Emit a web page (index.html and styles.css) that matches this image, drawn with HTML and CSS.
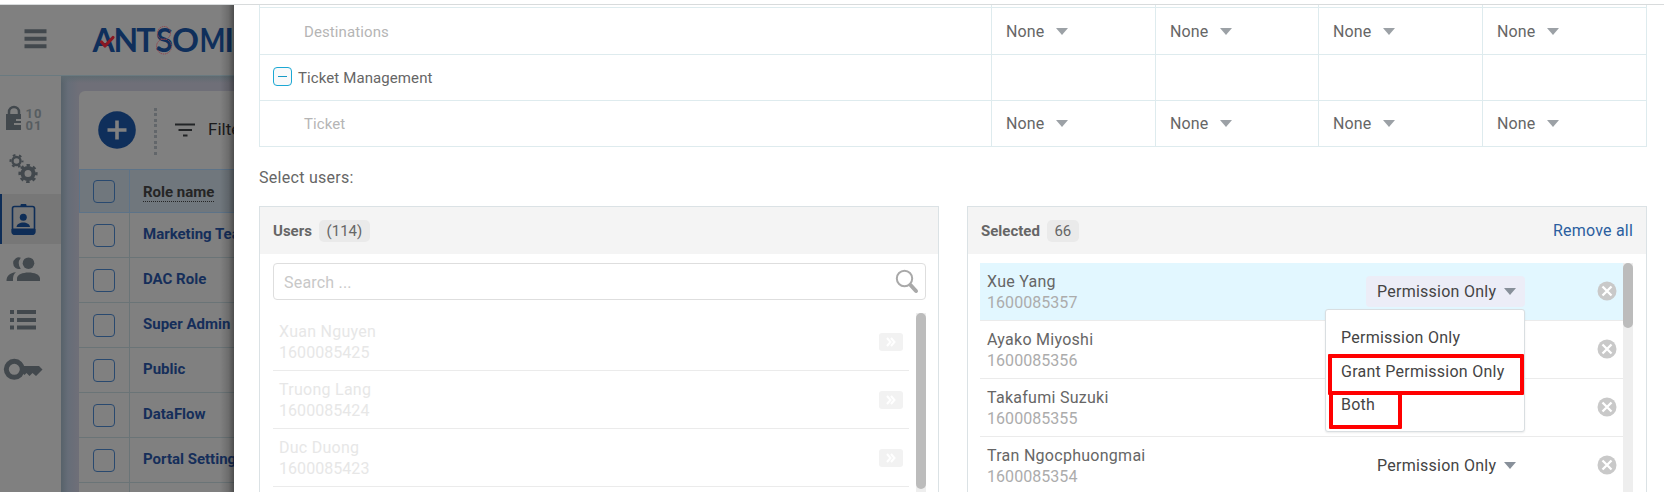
FILE: index.html
```html
<!DOCTYPE html>
<html lang="en">
<head>
<meta charset="utf-8">
<title>Roles</title>
<link rel="stylesheet" href="styles.css">
</head>
<body>
<div class="screen">
  <div class="app">
    <header class="topbar">
      <svg class="burger" width="23" height="20" viewBox="0 0 23 20"><path d="M.5 2.2h22M.5 9.700h22M.5 17.200h22" stroke="#42484d" stroke-width="4"/></svg>
      <svg class="logo" width="148" height="40" viewBox="90 20 148 40">
        <text class="logo-text" y="52" x="92.5 113.400 136.200 155.500">ANTS</text><text class="logo-text" y="52" x="172" textLength="27" lengthAdjust="spacingAndGlyphs">O</text><text class="logo-text" y="52" x="199.500" textLength="26" lengthAdjust="spacingAndGlyphs">M</text><text class="logo-text" y="52" x="224.500">I</text>
        <g fill="none" stroke="#91454e" stroke-width="1" stroke-dasharray="1.5 .8"><circle cx="164" cy="33" r="6.5"/><circle cx="164" cy="46.500" r="7.500"/></g>
        <path d="M101.500 42l3.500 4 8-8.500" fill="none" stroke="#8b1722" stroke-width="3.200" stroke-linecap="round" stroke-linejoin="round"/>
      </svg>
    </header>
    <div class="body">
      <nav class="side">
        <a class="nav"><svg width="62" height="50" viewBox="0 95 62 50"><path d="M9 115v-2a5 5 0 0 1 10 0v2" fill="none" stroke="#42484d" stroke-width="2.500"/><path d="M6 115h15v5h-5v2h5v2h-7v2h7v5H6z" fill="#42484d"/><text class="bits" x="25.500" y="119">10</text><text class="bits" x="25.500" y="131">01</text></svg></a>
        <a class="nav"><svg width="62" height="50" viewBox="0 145 62 50" fill="none" stroke="#42484d"><circle cx="16.500" cy="162" r="4" stroke-width="2.400"/><circle cx="16.500" cy="162" r="6" stroke-width="2" stroke-dasharray="2.600 3.680" stroke-dashoffset="1.300"/><circle cx="28" cy="174.500" r="5.500" stroke-width="4"/><circle cx="28" cy="174.500" r="8.300" stroke-width="2.600" stroke-dasharray="3.400 3.119" stroke-dashoffset="1.700"/></svg></a>
        <a class="nav active"><svg width="62" height="50" viewBox="0 194 62 50"><rect x="12.500" y="206.500" width="22" height="27" rx="2" fill="none" stroke="#0e2d57" stroke-width="1.600"/><path d="M21 206v-1.500h5v1.500M12 229h23v3.500a2 2 0 0 1-2 2H14a2 2 0 0 1-2-2z" fill="#0e2d57" stroke="#0e2d57"/><circle cx="23.300" cy="217.300" r="3.500" fill="#0e2d57"/><path d="M16.500 227c.5-6 13-6 13.500 0z" fill="#0e2d57"/></svg></a>
        <a class="nav"><svg width="62" height="50" viewBox="0 244 62 50" fill="#42484d"><path d="M20.800 257.700a5.800 5.800 0 1 0 0 11 9 9 0 0 1 0-11z"/><circle cx="28.500" cy="263.200" r="5.800"/><path d="M17 281v-2.500c0-8 23-8 23 0v2.500zM6.500 281c0-5 3-8 9.500-8.700-2.500 2-3 4-3 8.700z"/></svg></a>
        <a class="nav"><svg width="62" height="50" viewBox="0 294 62 50"><path d="M10 312h4M10 320h4M10 327.500h4M17 312h19M17 320h19M17 327.500h19" stroke="#42484d" stroke-width="4"/></svg></a>
        <a class="nav"><svg width="62" height="50" viewBox="0 344 62 50"><circle cx="14.300" cy="369.300" r="8" fill="none" stroke="#42484d" stroke-width="5"/><path d="M22 366h17l3.500 3.500-6.500 6.500-3.500-3-3 3-3-3-2 2-3-3z" fill="#42484d"/></svg></a>
      </nav>
      <main class="main">
        <section class="card">
          <div class="tools">
            <svg width="38" height="38" viewBox="0 0 38 38"><circle cx="19" cy="19" r="18.800" fill="#0f2f5b"/><path d="M19 9.500v19M9.500 19h19" stroke="#808080" stroke-width="3.600"/></svg>
            <span class="dots"></span>
            <svg class="funnel" width="20" height="14" viewBox="0 0 20 14"><path d="M0 1.500h20M3.500 7h13.500M8 12.500h4.500" stroke="#222426" stroke-width="2"/></svg>
            <span class="filter">Filter</span>
          </div>
          <div class="role head"><span class="check"><i></i></span><b>Role name</b></div>
          <div class="role"><span class="check"><i></i></span><b>Marketing Team</b></div>
          <div class="role"><span class="check"><i></i></span><b>DAC Role</b></div>
          <div class="role"><span class="check"><i></i></span><b>Super Admin</b></div>
          <div class="role"><span class="check"><i></i></span><b>Public</b></div>
          <div class="role"><span class="check"><i></i></span><b>DataFlow</b></div>
          <div class="role"><span class="check"><i></i></span><b>Portal Settings</b></div>
          <div class="role"><span class="check"></span></div>
        </section>
      </main>
    </div>
  </div>

  <div class="drawer">
    <div class="perms">
      <div class="row stub"><div></div><div></div><div></div><div></div><div></div></div>
      <div class="row first"><div class="sub">Destinations</div><div>None<i class="caret"></i></div><div>None<i class="caret"></i></div><div>None<i class="caret"></i></div><div>None<i class="caret"></i></div></div>
      <div class="row"><div class="group"><span class="minus"></span>Ticket Management</div><div></div><div></div><div></div><div></div></div>
      <div class="row"><div class="sub">Ticket</div><div>None<i class="caret"></i></div><div>None<i class="caret"></i></div><div>None<i class="caret"></i></div><div>None<i class="caret"></i></div></div>
    </div>
    <div class="label"><span>Select users:</span></div>
    <div class="panels">
      <section class="panel">
        <div class="panel-head"><b>Users</b><span class="badge b-users">(114)</span></div>
        <div class="search"><span>Search ...</span><svg width="24" height="25" viewBox="0 0 24 25" fill="none" stroke="#a9a9a9"><circle cx="9.500" cy="9.500" r="7.700" stroke-width="2"/><path d="M15.500 16l5.500 6" stroke-width="4" stroke-linecap="round"/></svg></div>
        <div class="list faded">
          <div class="rows">
            <div class="user"><div class="who"><span>Xuan Nguyen</span><small>1600085425</small></div><span class="add"><svg width="10" height="10" viewBox="0 0 10 10"><path d="M1 1l3.500 4L1 9M5 1l3.500 4L5 9" fill="none" stroke="#fff" stroke-width="2"/></svg></span></div>
            <div class="user"><div class="who"><span>Truong Lang</span><small>1600085424</small></div><span class="add"><svg width="10" height="10" viewBox="0 0 10 10"><path d="M1 1l3.500 4L1 9M5 1l3.500 4L5 9" fill="none" stroke="#fff" stroke-width="2"/></svg></span></div>
            <div class="user"><div class="who"><span>Duc Duong</span><small>1600085423</small></div><span class="add"><svg width="10" height="10" viewBox="0 0 10 10"><path d="M1 1l3.500 4L1 9M5 1l3.500 4L5 9" fill="none" stroke="#fff" stroke-width="2"/></svg></span></div>
          </div>
          <div class="scroll"><i class="thumb long"></i></div>
        </div>
      </section>
      <section class="panel">
        <div class="panel-head"><b>Selected</b><span class="badge b-sel">66</span><a class="remove">Remove all</a></div>
        <div class="list selected">
          <div class="rows">
            <div class="user on"><div class="who"><span>Xue Yang</span><small>1600085357</small></div>
              <div class="select open"><span>Permission Only</span><i class="caret"></i>
                <div class="menu"><div>Permission Only</div><div>Grant Permission Only</div><div>Both</div><i class="mark m1"></i><i class="mark m2"></i></div>
              </div>
              <svg class="x" width="20" height="20" viewBox="0 0 20 20"><circle cx="10" cy="10" r="9.500" fill="#c9c9c9"/><path d="M5.500 5.500l9 9M14.500 5.500l-9 9" stroke="#fff" stroke-width="2.300"/></svg></div>
            <div class="user"><div class="who"><span>Ayako Miyoshi</span><small>1600085356</small></div><svg class="x" width="20" height="20" viewBox="0 0 20 20"><circle cx="10" cy="10" r="9.500" fill="#c9c9c9"/><path d="M5.500 5.500l9 9M14.500 5.500l-9 9" stroke="#fff" stroke-width="2.300"/></svg></div>
            <div class="user"><div class="who"><span>Takafumi Suzuki</span><small>1600085355</small></div><svg class="x" width="20" height="20" viewBox="0 0 20 20"><circle cx="10" cy="10" r="9.500" fill="#c9c9c9"/><path d="M5.500 5.500l9 9M14.500 5.500l-9 9" stroke="#fff" stroke-width="2.300"/></svg></div>
            <div class="user"><div class="who"><span>Tran Ngocphuongmai</span><small>1600085354</small></div><div class="select"><span>Permission Only</span><i class="caret"></i></div><svg class="x" width="20" height="20" viewBox="0 0 20 20"><circle cx="10" cy="10" r="9.500" fill="#c9c9c9"/><path d="M5.500 5.500l9 9M14.500 5.500l-9 9" stroke="#fff" stroke-width="2.300"/></svg></div>
          </div>
          <div class="scroll"><i class="thumb short"></i></div>
        </div>
      </section>
    </div>
  </div>
</div>
</body>
</html>
```
FILE: styles.css
```css
* { box-sizing: border-box; }
body { margin: 0; font-family: Roboto, "Liberation Sans", sans-serif; font-size: 16px; color: #666; background: #fff; overflow: hidden; }
.screen { display: flex; width: 1664px; height: 492px; padding-top: 4px; overflow: hidden; }

/* dimmed application behind the drawer */
.app { width: 234px; height: 488px; border-top: 1px solid #d8dbdc; background: #808080; overflow: hidden; display: flex; flex-direction: column; flex: none; position: relative; }
.app::after { content: ""; position: absolute; top: 0; right: 0; bottom: 0; width: 14px; background: linear-gradient(90deg, rgba(0,0,0,0), rgba(0,0,0,.15) 60%, rgba(0,0,0,.4)); }
.topbar { height: 71px; flex: none; display: flex; border-bottom: 1px solid #6a7a80; white-space: nowrap; }
.burger { margin: 24px 0 0 24px; flex: none; }
.logo { margin: 15px 0 0 43px; flex: none; }
.logo-text { font: 700 32px Lato, sans-serif; fill: #0f2f5b; }
.body { display: flex; flex: 1; min-height: 0; }
.side { width: 61px; flex: none; padding-top: 18px; }
.nav { display: block; height: 50px; width: 61px; }
.nav svg { display: block; }
.nav.active { background: #777777; box-shadow: inset 2px 0 #0e2d57; }
.bits { font: 700 13px/1 Roboto, sans-serif; fill: #575d61; letter-spacing: 1px; }
.main { width: 173px; flex: none; padding: 15px 0 0 18px; background: linear-gradient(#5f6b71, rgba(95,107,113,0) 7px), linear-gradient(90deg, #57626a, #666d78 7px, #6f6f78 18px); }
.card { width: 155px; height: 402px; border-radius: 6px 0 0 0; background: #808080; overflow: hidden; white-space: nowrap; }
.tools { height: 78px; padding-left: 19px; display: flex; align-items: center; }
.tools > svg { flex: none; }
.tools > svg:first-child { margin-top: -1px; }
.dots { width: 3px; height: 47px; margin: 2px 0 0 18px; flex: none; background: repeating-linear-gradient(#62666a 0 3px, transparent 3px 5.500px); }
.tools > .funnel { margin: -1px 0 0 18px; }
.filter { margin: -2px 0 0 13px; font-size: 17px; color: #1b1b1b; }
.role { height: 45px; display: flex; align-items: center; border-bottom: 1px solid #6a7477; font-size: 15px; color: #152e5a; }
.role b { font-weight: 700; margin: -2px 0 0 13px; }
.role.head { height: 44px; border: 1px solid #5d7388; border-right: 0; background: #70777d; color: #252525; }
.role.head b { margin-top: 2px; border-bottom: 1px dotted #252525; }
.role.head .check { padding-left: 13px; width: 50px; border-color: #5d7388; }
.check { width: 51px; height: 100%; flex: none; padding-left: 14px; border-right: 1px solid #6a7477; display: flex; align-items: center; }
.check i { width: 22px; height: 23px; border: 1px solid #29496f; border-radius: 4px; }

/* drawer */
.drawer { flex: none; width: 1430px; height: 488px; border-top: 1px solid #d8dbdc; padding-left: 25px; background: #fff; }
.perms { width: 1388px; border-left: 1px solid #deebee; }
.row { display: grid; grid-template-columns: 732px 164px 163px 164px 164px; height: 46px; }
.row > div { border-right: 1px solid #deebee; border-bottom: 1px solid #deebee; display: flex; align-items: center; padding-left: 14px; letter-spacing: .1px; }
.row.stub { height: 3px; }
.row.first { height: 47px; }
.row > .sub { padding: 1px 0 0 44px; color: #b5b5b5; font-size: 15px; }
.row > .group { padding-left: 13px; font-size: 15px; }
.caret { width: 0; height: 0; border: 6px solid transparent; border-top: 7px solid #9ca1a6; border-bottom: 0; margin-left: 12px; }
.minus { width: 19px; height: 19px; margin: -2px 6px 0 0; border: 1px solid #1ca8d4; border-radius: 4px; background: linear-gradient(#1599c5, #1599c5) center / 9px 1px no-repeat #f8f9fa; }
.label { height: 59px; display: flex; align-items: center; padding-top: 2px; letter-spacing: .28px; }
.panels { display: flex; gap: 28px; }
.panel { width: 680px; height: 290px; border: 1px solid #dbe2e5; }
.panel-head { height: 47px; background: #f4f4f4; display: flex; align-items: center; padding: 0 13px; }
.panel-head b { font-weight: 700; font-size: 15px; }
.badge { height: 22px; margin-left: 7px; border-radius: 5px; background: #eaeaea; display: flex; align-items: center; justify-content: center; font-size: 15px; }
.b-users { width: 51px; }
.b-sel { width: 32px; }
.remove { margin-left: auto; color: #2b5e9f; letter-spacing: .2px; }
.search { height: 37px; margin: 9px 12px 0 13px; border: 1px solid #dedede; border-radius: 4px; display: flex; justify-content: space-between; align-items: center; padding: 0 6px 0 10px; color: #c8c8c8; }
.search span { padding-top: 2px; letter-spacing: .2px; }
.list { display: flex; }
.faded { margin: 13px 12px 0 13px; justify-content: space-between; color: #e7e7e7; }
.faded .rows { width: 636px; }
.selected { margin: 9px 13px 0 12px; }
.selected .rows { width: 643px; }
.user { height: 58px; border-bottom: 1px solid #ebebeb; display: flex; align-items: center; padding: 0 6px; }
.user.on { background: #e2f7ff; }
.selected .user { padding: 0 0 0 7px; }
.who { display: flex; flex-direction: column; margin-right: auto; line-height: 21px; padding-top: 1px; letter-spacing: .27px; }
.who small { font-size: 16px; letter-spacing: .05px; }
.selected small { color: #acacac; }
.add { width: 24px; height: 18px; border-radius: 3px; background: #f2f2f2; display: flex; align-items: center; justify-content: center; }
.x { margin: -1px 6px 0 72px; }
.scroll { width: 10px; height: 230px; background: #eee; flex: none; }
.thumb { display: block; width: 10px; border-radius: 5px; background: #bcbcbc; }
.long { height: 176px; }
.short { height: 65px; }
.select { width: 159px; height: 31px; border-radius: 4px; padding-left: 11px; display: flex; align-items: center; color: #444; position: relative; letter-spacing: .25px; }
.select.open { background: #ecedf7; }
.select > .caret { margin-left: 8px; border-top-color: #88909a; }
.menu { position: absolute; z-index: 2; left: -41px; top: 33px; width: 200px; height: 123px; padding: 11px 0 0 15px; border: 1px solid #d9dee1; border-radius: 3px; background: #fff; box-shadow: 0 1px 2px rgba(0,0,0,.08); }
.menu div { height: 33.600px; line-height: 33px; }
.mark { position: absolute; border: 4px solid #f00; border-radius: 1px; }
.m1 { left: 2px; top: 44px; width: 196px; height: 41px; }
.m2 { left: 3px; top: 81px; width: 73px; height: 38px; }
```
